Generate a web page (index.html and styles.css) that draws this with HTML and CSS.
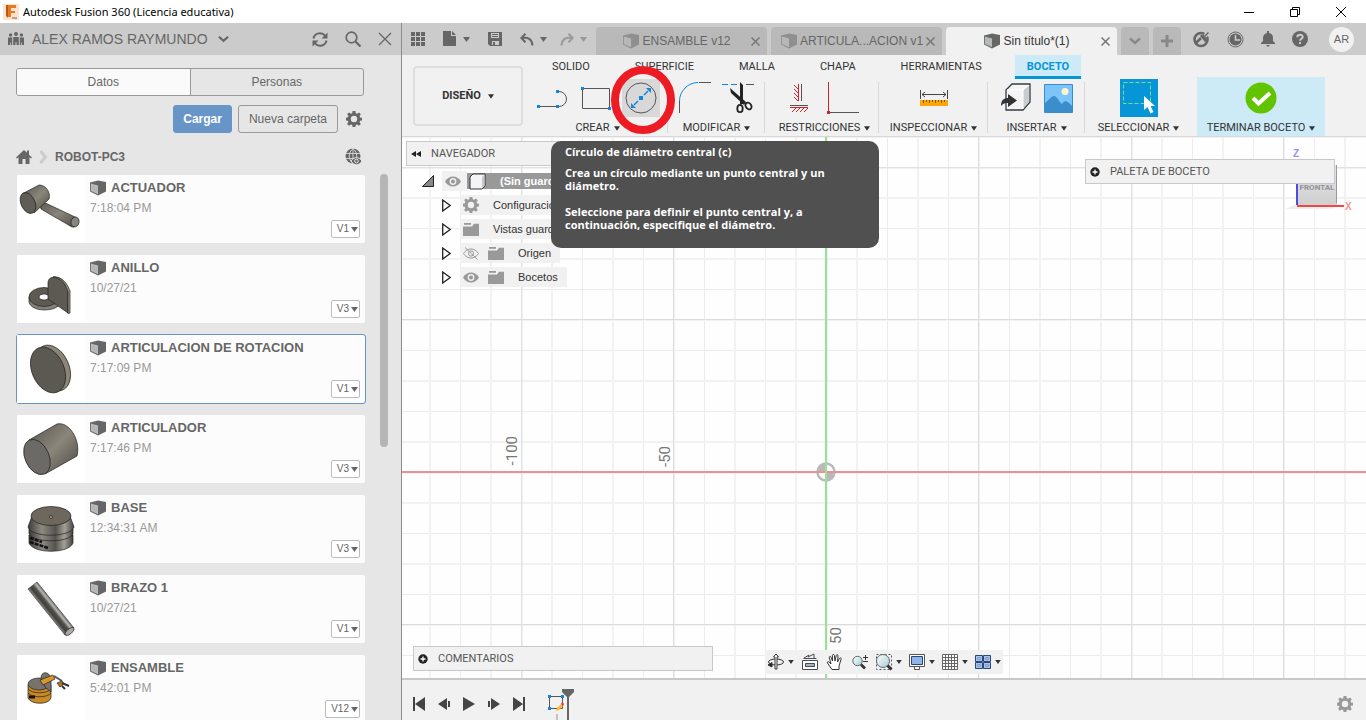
FILE: index.html
```html
<!DOCTYPE html>
<html lang="es">
<head>
<meta charset="utf-8">
<meta name="viewport" content="width=device-width, initial-scale=1">
<title>Autodesk Fusion 360 (Licencia educativa)</title>
<link rel="stylesheet" href="styles.css">
</head>
<body>
<svg class="defs" aria-hidden="true">
  <defs>
    <linearGradient id="metal" x1="0" y1="0" x2="1" y2="1"><stop offset="0" stop-color="#55534c"/><stop offset=".5" stop-color="#8b867b"/><stop offset="1" stop-color="#4b4943"/></linearGradient>
    <linearGradient id="rod" gradientUnits="userSpaceOnUse" x1="11" y1="14" x2="21" y2="6"><stop offset="0" stop-color="#8a8882"/><stop offset=".25" stop-color="#403f3b"/><stop offset=".5" stop-color="#55534e"/><stop offset=".7" stop-color="#b9b7b2"/><stop offset="1" stop-color="#4a4945"/></linearGradient>
    <linearGradient id="drum" x1="0" y1="0" x2="1" y2="0"><stop offset="0" stop-color="#3c3a36"/><stop offset=".3" stop-color="#8d8a84"/><stop offset=".6" stop-color="#55534e"/><stop offset=".8" stop-color="#a3a098"/><stop offset="1" stop-color="#45433e"/></linearGradient>
    <linearGradient id="glass" x1="0" y1="0" x2="1" y2="1"><stop offset="0" stop-color="#ffffff"/><stop offset="1" stop-color="#a9cdd3"/></linearGradient>
    <symbol id="cube" viewBox="0 0 16 16"><path d="M0 2.500 8 .5l8 1.500v9.500L8 15.500 0 11.500z" fill="#666"/><path d="M.8 3.500 8 5.500v8.800L.8 11z" fill="#b5b8b8"/></symbol>
    <symbol id="gear" viewBox="0 0 16 16"><path fill="currentColor" fill-rule="evenodd" d="M6.600 0h2.800l.4 2.200 1.400.6L13 1.400l1.800 1.800-1.300 1.900.6 1.300 2 .3v2.700l-2.100.4-.5 1.300 1.300 1.800-1.900 1.900-1.800-1.300-1.400.6-.3 2.200H6.600l-.4-2.200-1.400-.6L3 14.800l-1.900-1.900 1.300-1.800-.6-1.300L0 9.400V6.700l1.900-.4.5-1.300-1.200-1.900L3 1.400l1.900 1.300 1.300-.5zM8 4.800a3.200 3.200 0 1 0 0 6.400 3.200 3.200 0 0 0 0-6.400z"/></symbol>
    <symbol id="caret" viewBox="0 0 7 5"><path d="M0 0h7L3.500 5z" fill="currentColor"/></symbol>
    <symbol id="chevron" viewBox="0 0 12 8"><path d="M1 1.500 6 6l5-4.500" fill="none" stroke="currentColor" stroke-width="2.400"/></symbol>
    <symbol id="cross" viewBox="0 0 14 14"><path d="m1 1 12 12M13 1 1 13" fill="none" stroke="currentColor" stroke-width="1.300"/></symbol>
    <symbol id="cross-small" viewBox="0 0 9 9"><path d="m.5.5 8 8M8.500.5l-8 8" fill="none" stroke="currentColor" stroke-width="1.500"/></symbol>
    <symbol id="eye" viewBox="0 0 16 11"><path d="M0 5.500C2 2 5 .5 8 .5s6 1.500 8 5c-2 3.500-5 5-8 5s-6-1.500-8-5z" fill="#999"/><circle cx="8" cy="5.500" r="3.400" fill="#eee"/><circle cx="8" cy="5.500" r="2" fill="#999"/></symbol>
    <symbol id="eye-off" viewBox="0 0 16 13"><path d="M.5 6.500C2.500 3.500 5 2 8 2s5.500 1.500 7.500 4.500C13.500 9.500 11 11 8 11S2.500 9.500.5 6.500zM2 .5l12.500 12" fill="none" stroke="#999"/><circle cx="8" cy="6.500" r="2.600" fill="none" stroke="#999"/></symbol>
    <symbol id="folder" viewBox="0 0 16 13"><path d="M0 3.500h9L11 .8h5V13H0z" fill="#999"/><path d="M1 0h7v1.800H1z" fill="#999"/></symbol>
    <symbol id="arrow" viewBox="0 0 9 13"><path d="M.7 1 8.200 6.500.7 12z" fill="#fff" stroke="#222" stroke-width="1.300"/></symbol>
    <symbol id="plus-dot" viewBox="0 0 10 10"><circle cx="5" cy="5" r="4.700" fill="#222"/><path d="M5 2.500v5M2.500 5h5" stroke="#fff" stroke-width="1.300"/></symbol>
  </defs>
</svg>

<header class="titlebar">
  <svg class="app-logo" viewBox="0 0 16 16"><path d="M0 0h16v16H0z" fill="#fbe3cd"/><path d="M4 1h9v3H8v3h4v2H8v4H4z" fill="#e87a22"/><path d="M3 1h2v13l-2-2z" fill="#b9571a"/><path d="M9 13h5v2H9z" fill="#c9a37f"/></svg>
  <h1 class="titlebar__text">Autodesk Fusion 360 (Licencia educativa)</h1>
  <div class="window-buttons">
    <button aria-label="Minimizar"><svg width="12" height="12"><path d="M1 6.500h10" stroke="#000"/></svg></button>
    <button aria-label="Restaurar"><svg width="12" height="12" fill="none" stroke="#000"><path d="M1.500 3.500h7v7h-7zM3.500 3V1.500h7v7H9"/></svg></button>
    <button aria-label="Cerrar ventana"><svg width="12" height="12" fill="none" stroke="#000"><path d="m1 1 10 10M11 1 1 11"/></svg></button>
  </div>
</header>

<div class="app">
  <aside class="data-panel">
    <div class="data-panel__head">
      <button class="team"><svg width="16" height="14" viewBox="0 0 16 14" fill="#666"><circle cx="8" cy="2" r="2"/><circle cx="2.600" cy="3" r="1.700"/><circle cx="13.400" cy="3" r="1.700"/><path d="M5.200 5h5.600v8H8.500v-3h-1v3H5.200zM0 5.500h4.200V13H3v-2.500h-.8V13H0zM11.800 5.500H16V13h-2.200v-2.500H13V13h-1.200z"/></svg><span>ALEX RAMOS RAYMUNDO</span><svg width="11" height="8"><use href="#chevron"/></svg></button>
      <div class="data-panel__actions">
        <button aria-label="Actualizar"><svg width="16" height="15" viewBox="0 0 16 15" fill="none" stroke="#666" stroke-width="2"><path d="M1.500 6.500C2 3 5 1.200 8 1.200c2.500 0 4 1 5.300 2.600M14.500 8.500C14 12 11 13.800 8 13.800c-2.500 0-4-1-5.300-2.600"/><path d="M15.500.5v6h-6zM.5 14.500v-6h6z" fill="#666" stroke="none"/></svg></button>
        <button aria-label="Buscar"><svg width="16" height="16" viewBox="0 0 16 16" fill="none" stroke="#666"><circle cx="6.500" cy="6.500" r="5.300" stroke-width="1.700"/><path d="m10.500 10.500 5 5" stroke-width="2.200"/></svg></button>
        <button aria-label="Cerrar panel"><svg width="14" height="14"><use href="#cross"/></svg></button>
      </div>
    </div>
    <div class="data-panel__body">
      <div class="segmented">
        <button class="segmented__item segmented__item--on">Datos</button>
        <button class="segmented__item">Personas</button>
      </div>
      <div class="actions">
        <button class="btn btn--primary">Cargar</button>
        <button class="btn">Nueva carpeta</button>
        <button class="icon-btn" aria-label="Configuración"><svg width="16" height="16"><use href="#gear"/></svg></button>
      </div>
      <nav class="crumbs">
        <a href="#" aria-label="Inicio"><svg width="16" height="15" viewBox="0 0 16 15" fill="#666"><path d="M8 1 0 8.500l1 1L2.500 8.200V15h4v-5h3v5h4V8.200L15 9.500l1-1L13 5.700V1.500h-2v2.300z"/></svg></a>
        <svg width="9" height="14" fill="none" stroke="#ccc" stroke-width="3"><path d="m1.500 1 5 6-5 6"/></svg>
        <a href="#">ROBOT-PC3</a>
        <button class="crumbs__web" aria-label="Ver en la web"><svg width="17" height="17" viewBox="0 0 17 17"><circle cx="8" cy="8" r="7.500" fill="#666"/><path d="M0 5.500h16M0 10.500h16M8 0v16M8 .5c-5 4-5 11 0 15M8 .5c5 4 5 11 0 15" fill="none" stroke="#e6e6e6" stroke-width=".8"/><path d="M6 13c3-4.500 8-4.500 11 0-3 5-8 5-11 0z" fill="#666" stroke="#e6e6e6"/><circle cx="11.500" cy="13" r="1.800" fill="#666" stroke="#e6e6e6"/></svg></button>
      </nav>
    </div>
    <div class="files">
      <ul class="files__list">
        <li class="card">
          <div class="card__thumb"><svg viewBox="0 0 68 68" stroke="#222" stroke-width=".7"><path d="M22 25 58 42c5 2 2 11-3 10L24 34z" fill="url(#metal)"/><ellipse cx="58" cy="47" rx="4" ry="5" transform="rotate(15 58 47)" fill="#8a857a"/><path d="M5 19 22 10c7 0 12 8 10 14l-15 14z" fill="url(#metal)"/><ellipse cx="11" cy="28" rx="7" ry="11" transform="rotate(-25 11 28)" fill="#605d56"/></svg></div>
          <div class="card__info"><h2><svg width="16" height="16"><use href="#cube"/></svg>ACTUADOR</h2><p>7:18:04 PM</p></div>
          <button class="version">V1<svg width="7" height="5"><use href="#caret"/></svg></button>
        </li>
        <li class="card">
          <div class="card__thumb"><svg viewBox="0 0 68 68" stroke="#222" stroke-width=".7"><path d="M12 42v5c2 10 25 10 30 3v-6z" fill="#85817a"/><ellipse cx="27" cy="42" rx="15" ry="9.500" fill="#5d5a53"/><ellipse cx="27" cy="42" rx="5" ry="3" fill="#fff"/><path d="M31 44V28c0-9 14-8 20 8v22z" fill="#5d5a53"/><path d="M51 37v21.500l2-.5V36C49 25 42 21 36 22c8 0 12 6 15 15z" fill="#95917f"/></svg></div>
          <div class="card__info"><h2><svg width="16" height="16"><use href="#cube"/></svg>ANILLO</h2><p>10/27/21</p></div>
          <button class="version">V3<svg width="7" height="5"><use href="#caret"/></svg></button>
        </li>
        <li class="card card--selected">
          <div class="card__thumb"><svg viewBox="0 0 68 68" stroke="#222" stroke-width=".7"><ellipse cx="36" cy="33" rx="16" ry="24" transform="rotate(-24 36 33)" fill="#8c8475"/><ellipse cx="31" cy="35" rx="16" ry="24" transform="rotate(-24 31 35)" fill="#5b5952"/></svg></div>
          <div class="card__info"><h2><svg width="16" height="16"><use href="#cube"/></svg>ARTICULACION DE ROTACION</h2><p>7:17:09 PM</p></div>
          <button class="version">V1<svg width="7" height="5"><use href="#caret"/></svg></button>
        </li>
        <li class="card">
          <div class="card__thumb"><svg viewBox="0 0 68 68" stroke="#222" stroke-width=".7"><path d="M12 25 40 9c12-3 24 16 20 32L28 59z" fill="url(#metal)"/><ellipse cx="20" cy="42" rx="12" ry="18.500" transform="rotate(-24 20 42)" fill="#6b6a66"/></svg></div>
          <div class="card__info"><h2><svg width="16" height="16"><use href="#cube"/></svg>ARTICULADOR</h2><p>7:17:46 PM</p></div>
          <button class="version">V3<svg width="7" height="5"><use href="#caret"/></svg></button>
        </li>
        <li class="card">
          <div class="card__thumb"><svg viewBox="0 0 68 68" stroke="#222" stroke-width=".7"><path d="M12 40v8c4 11 40 11 44 0v-8z" fill="url(#drum)"/><path d="M12 34v5c5 9 40 9 44 0v-5z" fill="url(#drum)"/><path d="M15 21 11 32c3 11 42 11 46 0l-4-11z" fill="url(#drum)"/><ellipse cx="34" cy="21" rx="20" ry="9.500" fill="#6d675e"/><circle cx="34" cy="22" r="1.500" fill="#a9a39a"/><path d="m13 43 12 4m-12 0 18 6" stroke="#111" stroke-width="2.500" stroke-dasharray="4 1"/></svg></div>
          <div class="card__info"><h2><svg width="16" height="16"><use href="#cube"/></svg>BASE</h2><p>12:34:31 AM</p></div>
          <button class="version">V3<svg width="7" height="5"><use href="#caret"/></svg></button>
        </li>
        <li class="card">
          <div class="card__thumb"><svg viewBox="0 0 68 68"><path d="M11 14 20 7l37 46-9 7z" fill="url(#rod)" stroke="#444" stroke-width=".7"/><ellipse cx="52.500" cy="56.500" rx="5.500" ry="2.500" transform="rotate(-40 52.500 56.500)" fill="#aaa8a0" stroke="#222" stroke-width=".7"/></svg></div>
          <div class="card__info"><h2><svg width="16" height="16"><use href="#cube"/></svg>BRAZO 1</h2><p>10/27/21</p></div>
          <button class="version">V1<svg width="7" height="5"><use href="#caret"/></svg></button>
        </li>
        <li class="card">
          <div class="card__thumb"><svg viewBox="0 0 68 68" stroke="#222" stroke-width=".7"><path d="M11 30v13c3 7 21 7 23 0V30z" fill="#c98a26"/><path d="M11 34c4 5 19 5 23 0M11 38c4 5 19 5 23 0" fill="none"/><ellipse cx="22" cy="29" rx="11" ry="6" fill="#77736c"/><path d="M24 23c0-7 8-7 10 0v14l-6-5z" fill="#77736c"/><path d="m23 25 13-5 2 4-12 6z" fill="#d7972c"/><path d="m37 21 8 5" stroke="#555" stroke-width="2"/><path d="m40 28 5-2 2 3-4 3z" fill="#b07a20"/><path d="m45 28 7 3m-7 0 3 3" stroke="#333" stroke-width="2"/><path d="M12 42h6" stroke="#111" stroke-width="3"/></svg></div>
          <div class="card__info"><h2><svg width="16" height="16"><use href="#cube"/></svg>ENSAMBLE</h2><p>5:42:01 PM</p></div>
          <button class="version">V12<svg width="7" height="5"><use href="#caret"/></svg></button>
        </li>
      </ul>
      <div class="files__track"><div class="files__bar"></div></div>
    </div>
  </aside>

  <main class="workspace">
    <div class="topbar">
      <div class="quick">
        <button aria-label="Panel de datos"><svg width="14" height="14" fill="#666"><path d="M0 0h4v4H0zM5 0h4v4H5zM10 0h4v4h-4zM0 5h4v4H0zM5 5h4v4H5zM10 5h4v4h-4zM0 10h4v4H0zM5 10h4v4H5zM10 10h4v4h-4z"/></svg></button>
        <button aria-label="Archivo"><svg width="14" height="16" fill="#666"><path d="M0 0h8v5h5v10H0zM9 0l4 4H9z"/></svg><svg width="7" height="5"><use href="#caret"/></svg></button>
        <button aria-label="Guardar"><svg width="14" height="14" viewBox="0 0 14 14"><path d="M0 0h14v14H2l-2-2z" fill="#666"/><path d="M3 1h8v5H3zM4 9h7v4H4z" fill="#cbcbcb"/><path d="M4 2.500h6M4 4.500h6" stroke="#666"/><path d="M5 10h2v3H5z" fill="#666"/></svg></button>
        <button aria-label="Deshacer"><svg width="14" height="13" viewBox="0 0 14 13" fill="none" stroke="#666" stroke-width="2"><path d="M5.500.8 1.300 5l4.200 4.200M2 5c6-1 10 1 10.500 7.500"/></svg><svg width="7" height="5"><use href="#caret"/></svg></button>
        <button class="quick__off" aria-label="Rehacer"><svg width="14" height="13" viewBox="0 0 14 13" fill="none" stroke="#999" stroke-width="2"><path d="m8.500.8 4.200 4.200-4.200 4.200M12 5C6 4 2 6 1.500 12.500"/></svg><svg width="7" height="5"><use href="#caret"/></svg></button>
      </div>
      <div class="doc-tabs">
        <div class="doc-tab doc-tab--dim"><button class="doc-tab__name"><svg width="16" height="16"><use href="#cube"/></svg>ENSAMBLE v12</button><button class="doc-tab__close" aria-label="Cerrar ENSAMBLE"><svg width="9" height="9"><use href="#cross-small"/></svg></button></div>
        <div class="doc-tab doc-tab--dim"><button class="doc-tab__name"><svg width="16" height="16"><use href="#cube"/></svg>ARTICULA...ACION v1</button><button class="doc-tab__close" aria-label="Cerrar ARTICULACION"><svg width="9" height="9"><use href="#cross-small"/></svg></button></div>
        <div class="doc-tab doc-tab--on"><button class="doc-tab__name"><svg width="16" height="16"><use href="#cube"/></svg>Sin título*(1)</button><button class="doc-tab__close" aria-label="Cerrar Sin título"><svg width="9" height="9"><use href="#cross-small"/></svg></button></div>
        <button class="doc-extra" aria-label="Lista de documentos"><svg width="12" height="8"><use href="#chevron"/></svg></button>
        <button class="doc-extra" aria-label="Nuevo documento"><svg width="14" height="14"><path d="M7 1v12M1 7h12" stroke="#888" stroke-width="3"/></svg></button>
      </div>
      <div class="status">
        <button aria-label="Extensiones"><svg width="17" height="17" viewBox="0 0 17 17" fill="none" stroke="#666"><circle cx="8" cy="8.500" r="6.500" stroke-width="2.600"/><path d="M12 5 17 0" stroke="#cbcbcb" stroke-width="4"/><path d="m11.500 5.500 4-4" stroke-width="1.500"/><path d="M7 5c1-1.500 3-1.500 4-.5L13 7c1 2 0 3.500-1 4z" fill="#666" stroke="none"/><path d="M2 13 8 7" stroke-width="2.600"/></svg></button>
        <button aria-label="Estado de trabajos"><svg width="17" height="17" viewBox="0 0 17 17" fill="none"><circle cx="8.500" cy="8.500" r="7.500" stroke="#666"/><circle cx="8.500" cy="8.500" r="6" fill="#666"/><path d="M8.500 4v5H13" stroke="#cbcbcb" stroke-width="1.600"/></svg></button>
        <button aria-label="Notificaciones"><svg width="14" height="16" viewBox="0 0 14 16" fill="#666"><path d="M6 0h2v2c3 .5 4 3 4 5v3l2 2v1H0v-1l2-2V7c0-2 1-4.500 4-5zM5 14h4l-2 2z"/></svg></button>
        <button aria-label="Ayuda"><svg width="16" height="16" viewBox="0 0 16 16"><circle cx="8" cy="8" r="8" fill="#666"/><path d="M5.300 6.300c0-3.600 5.400-3.300 5.400-.4C10.700 7.800 8 7.800 8 9.800M8 11v2" fill="none" stroke="#cbcbcb" stroke-width="2"/></svg></button>
        <button class="avatar">AR</button>
      </div>
    </div>

    <div class="ribbon">
      <button class="ribbon__workspace">DISEÑO<svg width="7" height="5"><use href="#caret"/></svg></button>
      <div class="ribbon__main">
        <nav class="ribbon__tabs">
          <button>SOLIDO</button><button>SUPERFICIE</button><button>MALLA</button><button>CHAPA</button><button>HERRAMIENTAS</button><button class="is-on">BOCETO</button>
        </nav>
        <div class="ribbon__groups">
          <section class="group group--create">
            <div class="group__tools">
              <button aria-label="Línea"><svg width="34" height="32" fill="none" stroke="#555"><path d="M2 24.500h20M22 9.500h1a7.500 7.500 0 0 1 0 15h-1"/><path d="M1 23h3v3H1zM20 23h3v3h-3zM20 8h3v3h-3z" fill="#1285e0" stroke="none"/></svg></button>
              <button aria-label="Rectángulo"><svg width="30" height="32" fill="none" stroke="#555"><path d="M1.500 6.500h27v20h-27z"/><path d="M0 5h3v3H0zM27 25h3v3h-3z" fill="#1285e0" stroke="none"/></svg></button>
              <button class="tool--active" aria-label="Círculo de diámetro central"><svg width="32" height="32" fill="none"><circle cx="16" cy="16" r="15" stroke="#555"/><path d="m9 23 4-4M19 13l4-4" stroke="#1285e0" stroke-width="1.500"/><path d="M6 26v-5l5 5zM26 6v5l-5-5zM14 14h4v4h-4z" fill="#1285e0"/></svg></button>
            </div>
            <button class="group__label">CREAR<svg width="7" height="5"><use href="#caret"/></svg></button>
          </section>
          <section class="group group--modify">
            <div class="group__tools">
              <button aria-label="Empalme"><svg width="32" height="32" fill="none"><path d="M.5 31V19M20 .5h12" stroke="#555"/><path d="M.5 19C.5 9 9 .5 19 .5" stroke="#1285e0"/></svg></button>
              <button aria-label="Recortar"><svg width="32" height="32" fill="none"><path d="M0 2.500h18" stroke="#1285e0" stroke-dasharray="6 3"/><path d="M24 2.500h8" stroke="#555"/><path d="M18 0l3 3v19h-3zM8 6l16 14-2 3L9 11z" fill="#222"/><ellipse cx="18" cy="26.500" rx="2.700" ry="3.700" stroke="#222" stroke-width="1.800"/><ellipse cx="26.500" cy="24" rx="2.800" ry="3.600" transform="rotate(-35 26.500 24)" stroke="#222" stroke-width="1.800"/></svg></button>
            </div>
            <button class="group__label">MODIFICAR<svg width="7" height="5"><use href="#caret"/></svg></button>
          </section>
          <section class="group group--constraints">
            <div class="group__tools">
              <button aria-label="Horizontal/Vertical"><svg width="18" height="32" fill="none"><path d="M11.500 2v17M0 23.500h18" stroke="#555"/><path d="M8.500 2v17M0 25.500h18M8 7 4 3m4 8L4 7m4 8-4-4m4 8-4-4M6 26l-4 4m8-4-4 4m8-4-4 4m8-4-4 4" stroke="#c9252d"/></svg></button>
              <button aria-label="Coincidente"><svg width="32" height="32" fill="none"><path d="M3 30.500h29" stroke="#555"/><path d="M1.500 0v29" stroke="#c9252d"/><path d="M0 29h3v3H0z" fill="#c9252d"/></svg></button>
            </div>
            <button class="group__label">RESTRICCIONES<svg width="7" height="5"><use href="#caret"/></svg></button>
          </section>
          <section class="group group--inspect">
            <div class="group__tools">
              <button aria-label="Medir"><svg width="28" height="32" fill="none" stroke="#444"><path d="M.5 8v9M27.500 8v9M2 12.500h24M5 10l-3 2.500L5 15M23 10l3 2.500-3 2.500"/><path d="M0 18h28v6H0z" fill="#fba60a" stroke="none"/><path d="M3.500 18v3m3-3v2m3-2v3m3-3v2m3-2v3m3-3v2m3-2v3m3-3v2" stroke="#8a5500"/></svg></button>
            </div>
            <button class="group__label">INSPECCIONAR<svg width="7" height="5"><use href="#caret"/></svg></button>
          </section>
          <section class="group group--insert">
            <div class="group__tools">
              <button aria-label="Insertar derivado"><svg width="30" height="32" viewBox="0 0 30 32"><path d="M5 8 11 2h18v18l-7 8H5z" fill="#f5f5f7" stroke="#333c44" stroke-width="1.300"/><path d="M22 27V8l6-5v17z" fill="#c9ccd0"/><path d="M6 8h16v19M22 8l6-5" fill="none" stroke="#fff"/><path d="M0 24c0-6 3-8 7-8v-4l9 6.500L7 25v-4c-3-.5-5 .5-7 3z" fill="#333"/></svg></button>
              <button aria-label="Insertar imagen"><svg width="29" height="29" viewBox="0 0 29 29"><path d="M.5.5h28v28H.5z" fill="#7cc5fa" stroke="#3b8dcb"/><circle cx="21" cy="7.500" r="3.500" fill="#fdf6c9"/><path d="M1 19c4-3 6-7 9-7s5 6 8 8c2-4 5-4 10 2v6H1z" fill="#3b8dcb"/></svg></button>
            </div>
            <button class="group__label">INSERTAR<svg width="7" height="5"><use href="#caret"/></svg></button>
          </section>
          <section class="group group--select">
            <div class="group__tools">
              <button class="tool--select" aria-label="Seleccionar"><svg width="38" height="38" viewBox="0 0 38 38"><path d="M3.500 3.500h27v21h-27z" fill="none" stroke="#79dc8b" stroke-dasharray="4 2"/><path d="M24 17v14l3.500-3 3 6.500 3-1.500-3-6h4.500z" fill="#fff"/></svg></button>
            </div>
            <button class="group__label">SELECCIONAR<svg width="7" height="5"><use href="#caret"/></svg></button>
          </section>
          <section class="group group--finish">
            <div class="group__tools">
              <button aria-label="Terminar boceto"><svg width="32" height="32" viewBox="0 0 32 32"><circle cx="16" cy="16" r="15.500" fill="#62c400"/><path d="m8 16 5.500 5.500L25 11" fill="none" stroke="#fff" stroke-width="4"/></svg></button>
            </div>
            <button class="group__label">TERMINAR BOCETO<svg width="7" height="5"><use href="#caret"/></svg></button>
          </section>
        </div>
      </div>
      <svg class="highlight" viewBox="0 0 66 70" aria-hidden="true"><ellipse cx="33" cy="35" rx="28" ry="30" fill="none" stroke="#ed1c24" stroke-width="8"/></svg>
      <div class="tooltip" role="tooltip">
        <p>Círculo de diámetro central (c)</p>
        <p>Crea un círculo mediante un punto central y un diámetro.</p>
        <p class="tooltip__hint">Seleccione para definir el punto central y, a continuación, especifique el diámetro.</p>
      </div>
    </div>

    <div class="canvas">
      <svg class="canvas__grid" aria-hidden="true">
        <defs>
          <pattern id="minor" x="424" y="335" width="61" height="61" patternUnits="userSpaceOnUse"><path d="M0 .5h61M.5 0v61" stroke="#ececec" fill="none"/><path d="M0 31h61M31 0v61" stroke="#f2f2f2" stroke-width="2" fill="none"/></pattern>
          <pattern id="major" x="424" y="335" width="305" height="305" patternUnits="userSpaceOnUse"><path d="M0 152.500h305M152.500 0v305" stroke="#dcdcdc" fill="none"/><path d="M0 0h305M0 0v305" stroke="#e2e2e2" stroke-width="3" fill="none"/></pattern>
        </defs>
        <rect width="100%" height="100%" fill="url(#minor)"/>
        <rect width="100%" height="100%" fill="url(#major)"/>
        <circle cx="424" cy="335" r="8.500" fill="#fff" stroke="#b9b9b9" stroke-width="2.500"/>
        <path d="M424 335v-8a8 8 0 0 0-8 8zM424 335v8a8 8 0 0 0 8-8z" fill="#b9b9b9"/>
        <path d="M0 335h4000" stroke="#e59394" stroke-width="2"/>
        <path d="M424 0v2000" stroke="#94e494" stroke-width="2"/>
      </svg>
      <span class="axis-label axis-label--100">-100</span>
      <span class="axis-label axis-label--50">-50</span>
      <span class="axis-label axis-label--up50">50</span>

      <section class="browser">
        <h2 class="browser__head"><svg width="10" height="6" fill="#222"><path d="M5 0v6L0 3zM10 0v6L5 3z"/></svg>NAVEGADOR</h2>
        <ul class="tree">
          <li class="tree__root"><button aria-label="Contraer"><svg width="12" height="12"><path d="M11.500.5v11H.5z" fill="#888" stroke="#222"/></svg></button><span class="tree__eye"><svg width="16" height="11"><use href="#eye"/></svg></span><span class="tree__name"><svg width="17" height="17" viewBox="0 0 17 17"><path d="m1 4 3-3h12v12l-3 3H1z" fill="#f4f4f6" stroke="#333"/><path d="M13 15.500V4l2.500-2.500V13z" fill="#c5c7cb"/></svg>(Sin guardar)</span></li>
          <li><button aria-label="Expandir"><svg width="9" height="13"><use href="#arrow"/></svg></button><span class="tree__item"><svg class="tree__icon" width="16" height="16"><use href="#gear"/></svg>Configuración</span></li>
          <li><button aria-label="Expandir"><svg width="9" height="13"><use href="#arrow"/></svg></button><span class="tree__item"><svg class="tree__icon" width="16" height="13"><use href="#folder"/></svg>Vistas guardadas</span></li>
          <li><button aria-label="Expandir"><svg width="9" height="13"><use href="#arrow"/></svg></button><span class="tree__item"><svg class="tree__vis" width="16" height="13"><use href="#eye-off"/></svg><svg class="tree__icon" width="16" height="13"><use href="#folder"/></svg>Origen</span></li>
          <li><button aria-label="Expandir"><svg width="9" height="13"><use href="#arrow"/></svg></button><span class="tree__item"><svg class="tree__vis" width="16" height="11"><use href="#eye"/></svg><svg class="tree__icon" width="16" height="13"><use href="#folder"/></svg>Bocetos</span></li>
        </ul>
      </section>

      <svg class="viewcube" viewBox="0 0 72 66" aria-hidden="true">
        <defs><linearGradient id="face" x1="0" y1="0" x2="0" y2="1"><stop offset="0" stop-color="#e6e6e6"/><stop offset="1" stop-color="#cfcfcf"/></linearGradient></defs>
        <path d="M0 62 10 57h44l-8 5z" fill="#eee"/><path d="M11 18h40v40H11z" fill="url(#face)"/><path d="M50.500 18v38" stroke="#999"/>
        <path d="M11 18v40" stroke="#4d4de0" stroke-width="2"/><path d="M11 59h47" stroke="#ef4848" stroke-width="2"/>
        <text x="7" y="10" class="viewcube__z">Z</text><text x="59" y="63" class="viewcube__x">X</text><text x="31" y="43" class="viewcube__face">FRONTAL</text>
      </svg>

      <button class="dock dock--palette"><svg width="10" height="10"><use href="#plus-dot"/></svg>PALETA DE BOCETO</button>
      <button class="dock dock--comments"><svg width="10" height="10"><use href="#plus-dot"/></svg>COMENTARIOS</button>

      <div class="navbar">
        <button aria-label="Órbita"><svg width="18" height="18" viewBox="0 0 18 18" fill="none" stroke="#333"><ellipse cx="9" cy="9" rx="7.500" ry="3"/><path d="M8 16V4H6.500L9 1l2.500 3H10v12z" fill="#fff"/><path d="m5 9.500-4 2.500 4 2z" fill="#222"/></svg><svg width="6" height="4"><use href="#caret"/></svg></button>
        <button aria-label="Mirar a"><svg width="18" height="18" viewBox="0 0 18 18" fill="none" stroke="#444b52"><path d="M1.500 7.500h15v9h-15z" fill="#fff"/><path d="M4.500 10.500h9v3h-9z" fill="#a9b4ba"/><path d="M2.500 5.500h13M3 5l5-3-1 2 6-3v4"/></svg></button>
        <button aria-label="Encuadre"><svg width="18" height="18" viewBox="0 0 18 18" fill="#fff" stroke="#333"><path d="M6 16.500 1.500 10c-.6-1.500 1-1.700 1.800-.8L5 11 3.300 4.500c0-1.500 1.500-1.300 1.900 0L6.500 8 6.400 2.500c.2-1.500 1.800-1.300 2 0L9 8l1.200-5.500c.5-1.400 1.900-.9 1.800.4L11.500 9l2-3.700c.8-1 2-.4 1.600.8L13 13v3.500z"/></svg></button>
        <button aria-label="Zoom"><svg width="18" height="18" viewBox="0 0 18 18"><circle cx="6.500" cy="8" r="4.700" fill="url(#glass)" stroke="#5a6b74"/><path d="m10 11.500 4 4" stroke="#333" stroke-width="2.600"/><path d="M14.500 2v5M12 4.500h5M12 8.500h5" stroke="#333"/></svg></button>
        <button aria-label="Ajustar"><svg width="18" height="18" viewBox="0 0 18 18"><path d="M1.500 1.500h15v15h-15z" fill="none" stroke="#555" stroke-dasharray="2 2"/><circle cx="8" cy="8" r="6.500" fill="url(#glass)" stroke="#5a6b74"/><path d="m12.500 12.500 4 4" stroke="#333" stroke-width="2.800"/></svg><svg width="6" height="4"><use href="#caret"/></svg></button>
        <button aria-label="Visualización"><svg width="18" height="18" viewBox="0 0 18 18" fill="#fff" stroke="#555"><path d="M1.500 1.500h15v12h-15z"/><path d="M3.500 3.500h11v8h-11z" fill="#8fb4e6" stroke="#29477f"/><path d="M6.500 13.500h5v3h-5z"/></svg><svg width="6" height="4"><use href="#caret"/></svg></button>
        <button aria-label="Rejilla"><svg width="18" height="18" viewBox="0 0 18 18" fill="#fff" stroke="#666"><path d="M1.500 1.500h15v15h-15zM4.500 1v16M7.500 1v16M10.500 1v16M13.500 1v16M1 4.500h16M1 7.500h16M1 10.500h16M1 13.500h16"/></svg><svg width="6" height="4"><use href="#caret"/></svg></button>
        <button aria-label="Ventanas"><svg width="18" height="18" viewBox="0 0 18 18" fill="#a9c4e4" stroke="#29477f"><path d="M1.500 2.500h7v6h-7zM9.500 2.500h7v6h-7zM1.500 9.500h7v6h-7zM9.500 9.500h7v6h-7z"/><path d="M3.500 4.500h3v2h-3zM11.500 4.500h3v2h-3zM3.500 11.500h3v2h-3zM11.500 11.500h3v2h-3z" stroke="#7f9fcb"/></svg><svg width="6" height="4"><use href="#caret"/></svg></button>
      </div>
    </div>

    <footer class="timeline">
      <button aria-label="Ir al inicio"><svg width="12" height="14" fill="#444"><path d="M0 0h2v14H0zM12 0v14L2 7z"/></svg></button>
      <button aria-label="Paso atrás"><svg width="12" height="14" fill="#444"><path d="M9 1v12L0 7zM10 4h2v6h-2z"/></svg></button>
      <button aria-label="Reproducir"><svg width="12" height="14" fill="#444"><path d="M0 0v14l12-7z"/></svg></button>
      <button aria-label="Paso adelante"><svg width="12" height="14" fill="#444"><path d="M3 1v12l9-6zM0 4h2v6H0z"/></svg></button>
      <button aria-label="Ir al final"><svg width="12" height="14" fill="#444"><path d="M0 0v14l10-7zM10 0h2v14h-2z"/></svg></button>
      <button class="timeline__feature" aria-label="Boceto"><svg width="28" height="32" viewBox="0 0 28 32"><path d="M1.500 8.500h13v12h-13z" fill="none" stroke="#555"/><path d="M0 7h3v3H0zM13 7h3v3h-3zM0 19h3v3H0z" fill="#1285e0"/><path d="m8 23 1-3 4-4 2 2-4 4z" fill="#fbb829"/><path d="m13 16 1-2 2 2-1 2z" fill="#e33"/><path d="M9 26v6" stroke="#c4c4c4" stroke-width="2"/><path d="M14 1h12v3l-5 5v23h-2V9l-5-5z" fill="#666"/></svg></button>
      <button class="timeline__settings" aria-label="Ajustes"><svg width="16" height="16"><use href="#gear"/></svg></button>
    </footer>
  </main>
</div>
</body>
</html>
```
FILE: styles.css
```css
* { box-sizing: border-box; }
html, body { height: 100%; }
body {
  margin: 0;
  display: flex;
  flex-direction: column;
  overflow: hidden;
  background: #fff;
  color: #666;
  font: 12px/16px "Liberation Sans", Arial, sans-serif;
}
h1, h2, p, ul { margin: 0; padding: 0; font: inherit; }
ul { list-style: none; }
a { color: inherit; text-decoration: none; }
svg { display: block; flex: none; }
button {
  display: flex;
  align-items: center;
  justify-content: center;
  margin: 0;
  padding: 0;
  border: 0;
  background: none;
  color: inherit;
  font: inherit;
  white-space: nowrap;
}
.defs { position: absolute; width: 0; height: 0; }

/* Title bar */
.titlebar { flex: none; height: 23px; display: flex; align-items: center; gap: 4px; padding: 0 2px 0 3px; }
.app-logo { width: 16px; height: 16px; }
.titlebar__text { color: #000; font: 11px/16px "Noto Sans", "Segoe UI", sans-serif; }
.window-buttons { display: flex; margin-left: auto; }
.window-buttons button { width: 46px; height: 20px; }

.app { flex: 1; min-height: 0; display: flex; }

/* Data panel */
.data-panel { flex: 0 0 402px; display: flex; flex-direction: column; background: #e6e6e6; border-right: 1px solid #8c8c8c; }
.data-panel__head { flex: none; height: 32px; display: flex; justify-content: space-between; align-items: center; padding: 0 9px 0 8px; background: #cbcbcb; }
.team { gap: 8px; font-size: 14px; }
.team svg:last-child { margin-left: 2px; }
.data-panel__actions { display: flex; gap: 17px; }
.data-panel__body { flex: none; padding: 13px 37px 0 16px; }
.segmented { display: flex; height: 28px; border: 1px solid #999; border-radius: 3px; overflow: hidden; }
.segmented__item { flex: 1; }
.segmented__item--on { background: #fafafa; border-right: 1px solid #999; }
.actions { display: flex; justify-content: flex-end; align-items: center; gap: 6px; margin-top: 9px; }
.actions .icon-btn { margin: 0 2px; }
.btn { height: 28px; padding: 0 10px; border: 1px solid #999; border-radius: 3px; }
.btn--primary { padding: 0 9px; border-color: #6795c8; background: #6795c8; color: #fff; font-weight: 700; }
.crumbs { display: flex; align-items: center; gap: 7px; height: 41px; font-weight: 700; padding-top: 6px; }
.crumbs__web { margin-left: auto; margin-right: 2px; }
.files { flex: 1; min-height: 0; display: flex; padding-left: 16px; overflow: hidden; }
.files__list { flex: 0 0 350px; display: flex; flex-direction: column; gap: 10px; }
.card { flex: 0 0 70px; display: flex; border: 1px solid transparent; border-radius: 3px; background: #fcfcfc; background-clip: padding-box; }
.card--selected { border-color: #6795c8; }
.card__thumb { flex: 0 0 68px; background: #fff; }
.card__info { flex: 1; padding: 5px 0 0 5px; color: #999; }
.card__info h2 { display: flex; gap: 5px; margin-bottom: 4px; color: #666; font-size: 13px; font-weight: 700; }
.version { align-self: flex-end; gap: 2px; height: 18px; margin: 0 5px 5px 0; padding: 0 1px 0 5px; border: 1px solid #bbb; border-radius: 2px; background: #fff; font-size: 10px; }
.files__track { padding-left: 14px; }
.files__bar { width: 8px; height: 50%; border-radius: 4px; background: #b5b5b5; }

/* Workspace */
.workspace { flex: 1; min-width: 0; display: flex; flex-direction: column; }
.topbar { flex: none; height: 32px; display: flex; background: #cbcbcb; }
.quick { flex: 0 0 194px; display: flex; align-items: center; gap: 18px; padding-left: 9px; }
.quick button { gap: 6px; }
.quick .quick__off { margin-left: -5px; color: #999; }
.doc-tabs { display: flex; align-items: flex-end; gap: 4px; }
.doc-tab { flex: 0 0 171px; height: 28px; display: flex; align-items: center; padding: 0 7px; background: #b9b9b9; border-radius: 4px 4px 0 0; }
.doc-tab__name { flex: 1; gap: 3px; }
.doc-tab--dim .doc-tab__name svg { opacity: .5; }
.doc-tab--on { background: #f1f1f1; color: #333; }
.doc-tab__close { color: #777; }
.doc-extra { width: 28px; height: 28px; border-radius: 4px 4px 0 0; background: #b9b9b9; color: #888; }
.status { flex: 1; display: flex; align-items: center; justify-content: flex-end; gap: 17px; padding-right: 12px; }
.avatar { width: 25px; height: 25px; margin-left: 4px; border-radius: 50%; background: #f1f1f1; font-size: 11px; }

.ribbon { flex: none; position: relative; z-index: 2; height: 82px; display: flex; background: #f1f1f1; border-bottom: 1px solid #d8d8d8; color: #333; font: 11px/14px Roboto, "Liberation Sans", sans-serif; }
.ribbon__workspace { flex: 0 0 110px; height: 60px; margin: 11px 0 0 11px; gap: 7px; border: 2px solid #dedede; border-radius: 4px; font-weight: 700; }
.ribbon__workspace svg, .group__label svg { width: 6px; height: 5px; }
.ribbon__main { display: flex; flex-direction: column; }
.ribbon__tabs { display: flex; gap: 21px; height: 24px; padding-left: 17px; }
.ribbon__tabs button { padding: 0 12px; }
.ribbon__tabs .is-on { background: #cdeaf7; box-shadow: inset 0 -3px #0696d7; color: #0696d7; font-weight: 700; }
.ribbon__groups { display: flex; flex: 1; }
.group { position: relative; display: flex; flex-direction: column; justify-content: space-between; align-items: center; padding-bottom: 1px; }
.group:nth-child(-n+5)::after { content: ""; position: absolute; right: 0; top: 3px; bottom: 3px; width: 1px; background: #d8d8d8; }
.group--create { width: 145px; padding-left: 4px; }
.group--modify { width: 97px; }
.group--constraints { width: 114px; padding-left: 5px; }
.group--inspect { width: 109px; }
.group--insert { width: 97px; }
.group--select { width: 107px; }
.group--finish { width: 128px; margin: -2px 0 0 5px; background: #cdeaf7; }
.group__tools { height: 38px; display: flex; align-items: center; gap: 11px; }
.group--finish .group__tools { margin-top: 2px; }
.group--constraints .group__tools { gap: 19px; }
.group--insert .group__tools { gap: 13px; }
.group__label { gap: 4px; }
.tool--active { width: 38px; height: 38px; background: #d8d8d8; }
.tool--select { width: 38px; height: 38px; background: #0696d7; }
.highlight { position: absolute; left: 208px; top: 10px; width: 66px; height: 70px; pointer-events: none; }
.tooltip { position: absolute; left: 149px; top: 86px; width: 328px; padding: 4px 36px 17px 14px; border-radius: 10px; background: #505050; color: #fff; font: 700 11px/13px "Open Sans", "Noto Sans", sans-serif; }
.tooltip p { margin-bottom: 8px; }
.tooltip .tooltip__hint { margin: 13px 0 0; }

/* Drawing canvas */
.canvas { flex: 1; min-height: 0; position: relative; overflow: hidden; background: #fefefe; }
.canvas__grid { position: absolute; inset: 0; width: 100%; height: 100%; }
.axis-label { position: absolute; writing-mode: vertical-rl; transform: rotate(180deg); color: #777; font: 15px/16px Roboto, "Liberation Sans", sans-serif; }
.axis-label--100 { left: 102px; top: 299px; }
.axis-label--50 { left: 255px; top: 309px; }
.axis-label--up50 { left: 426px; top: 490px; }
.browser { position: absolute; left: 4px; top: 4px; width: 300px; color: #333; font-size: 11px; }
.browser__head, .dock { display: flex; align-items: center; justify-content: flex-start; height: 25px; border: 1px solid #c8c8c8; background: #f1f1f1; color: #555; font: 11px/14px Roboto, "Liberation Sans", sans-serif; }
.browser__head { gap: 10px; padding-left: 4px; }
.tree { display: flex; flex-direction: column; gap: 4px; padding-top: 5px; }
.tree li { display: flex; align-items: center; height: 20px; padding-left: 36px; }
.tree li button { width: 9px; }
.tree .tree__root { padding-left: 16px; }
.tree .tree__root button { width: 12px; }
.tree__eye { display: flex; align-items: center; width: 25px; height: 20px; margin-left: 8px; padding-left: 3px; background: #f1f1f1; }
.tree__name { display: flex; align-items: center; gap: 14px; height: 16px; padding: 0 8px 0 2px; background: #999; color: #fff; font-weight: 700; }
.tree__item { display: flex; align-items: center; height: 20px; margin-left: 9px; padding: 0 9px 0 3px; background: #f1f1f1; }
.tree__icon { margin-right: 14px; color: #999; }
.tree__vis { margin-right: 9px; }
.dock { position: absolute; gap: 10px; padding-left: 4px; }
.dock--palette { right: 31px; top: 22px; width: 250px; }
.dock--comments { left: 11px; bottom: 7px; width: 300px; }
.viewcube { position: absolute; right: 8px; top: 10px; width: 72px; height: 66px; font-family: "Liberation Sans", sans-serif; }
.viewcube text { font-size: 10px; font-weight: 700; }
.viewcube .viewcube__z { fill: #9494f5; }
.viewcube .viewcube__x { fill: #f59494; }
.viewcube .viewcube__face { fill: #8f9398; font-family: Roboto, sans-serif; font-size: 8px; text-anchor: middle; }
.navbar { position: absolute; left: 363px; bottom: 4px; display: flex; align-items: center; gap: 6px; height: 24px; padding: 0 2px; background: #f1f1f1; color: #333; }
.navbar button { gap: 3px; min-width: 19px; }

/* Timeline */
.timeline { flex: none; height: 42px; display: flex; align-items: center; gap: 13px; padding: 8px 13px 0 11px; border-top: 2px solid #c8c8c8; background: #f1f1f1; }
.timeline__feature { align-self: flex-end; margin-left: 10px; }
.timeline__settings { margin-left: auto; color: #999; }
```
